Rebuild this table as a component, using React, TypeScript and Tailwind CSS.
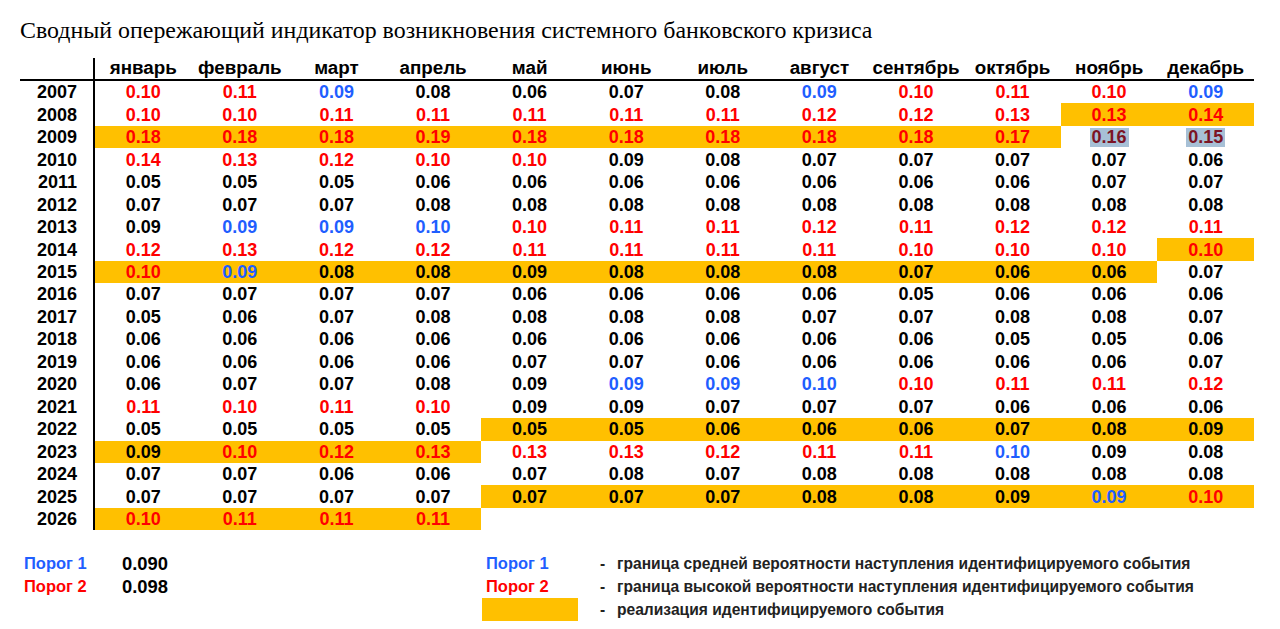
const months = [
  "январь",
  "февраль",
  "март",
  "апрель",
  "май",
  "июнь",
  "июль",
  "август",
  "сентябрь",
  "октябрь",
  "ноябрь",
  "декабрь",
];

// value + colour code: r = red, b = blue, k = black, d = dark red on grey
type Row = { year: number; cells: string[]; hl: [number, number] | null };

const rows: Row[] = [
  { year: 2007, cells: ["0.10r", "0.11r", "0.09b", "0.08k", "0.06k", "0.07k", "0.08k", "0.09b", "0.10r", "0.11r", "0.10r", "0.09b"], hl: null },
  { year: 2008, cells: ["0.10r", "0.10r", "0.11r", "0.11r", "0.11r", "0.11r", "0.11r", "0.12r", "0.12r", "0.13r", "0.13r", "0.14r"], hl: [10, 11] },
  { year: 2009, cells: ["0.18r", "0.18r", "0.18r", "0.19r", "0.18r", "0.18r", "0.18r", "0.18r", "0.18r", "0.17r", "0.16d", "0.15d"], hl: [0, 9] },
  { year: 2010, cells: ["0.14r", "0.13r", "0.12r", "0.10r", "0.10r", "0.09k", "0.08k", "0.07k", "0.07k", "0.07k", "0.07k", "0.06k"], hl: null },
  { year: 2011, cells: ["0.05k", "0.05k", "0.05k", "0.06k", "0.06k", "0.06k", "0.06k", "0.06k", "0.06k", "0.06k", "0.07k", "0.07k"], hl: null },
  { year: 2012, cells: ["0.07k", "0.07k", "0.07k", "0.08k", "0.08k", "0.08k", "0.08k", "0.08k", "0.08k", "0.08k", "0.08k", "0.08k"], hl: null },
  { year: 2013, cells: ["0.09k", "0.09b", "0.09b", "0.10b", "0.10r", "0.11r", "0.11r", "0.12r", "0.11r", "0.12r", "0.12r", "0.11r"], hl: null },
  { year: 2014, cells: ["0.12r", "0.13r", "0.12r", "0.12r", "0.11r", "0.11r", "0.11r", "0.11r", "0.10r", "0.10r", "0.10r", "0.10r"], hl: [11, 11] },
  { year: 2015, cells: ["0.10r", "0.09b", "0.08k", "0.08k", "0.09k", "0.08k", "0.08k", "0.08k", "0.07k", "0.06k", "0.06k", "0.07k"], hl: [0, 10] },
  { year: 2016, cells: ["0.07k", "0.07k", "0.07k", "0.07k", "0.06k", "0.06k", "0.06k", "0.06k", "0.05k", "0.06k", "0.06k", "0.06k"], hl: null },
  { year: 2017, cells: ["0.05k", "0.06k", "0.07k", "0.08k", "0.08k", "0.08k", "0.08k", "0.07k", "0.07k", "0.08k", "0.08k", "0.07k"], hl: null },
  { year: 2018, cells: ["0.06k", "0.06k", "0.06k", "0.06k", "0.06k", "0.06k", "0.06k", "0.06k", "0.06k", "0.05k", "0.05k", "0.06k"], hl: null },
  { year: 2019, cells: ["0.06k", "0.06k", "0.06k", "0.06k", "0.07k", "0.07k", "0.06k", "0.06k", "0.06k", "0.06k", "0.06k", "0.07k"], hl: null },
  { year: 2020, cells: ["0.06k", "0.07k", "0.07k", "0.08k", "0.09k", "0.09b", "0.09b", "0.10b", "0.10r", "0.11r", "0.11r", "0.12r"], hl: null },
  { year: 2021, cells: ["0.11r", "0.10r", "0.11r", "0.10r", "0.09k", "0.09k", "0.07k", "0.07k", "0.07k", "0.06k", "0.06k", "0.06k"], hl: null },
  { year: 2022, cells: ["0.05k", "0.05k", "0.05k", "0.05k", "0.05k", "0.05k", "0.06k", "0.06k", "0.06k", "0.07k", "0.08k", "0.09k"], hl: [4, 11] },
  { year: 2023, cells: ["0.09k", "0.10r", "0.12r", "0.13r", "0.13r", "0.13r", "0.12r", "0.11r", "0.11r", "0.10b", "0.09k", "0.08k"], hl: [0, 3] },
  { year: 2024, cells: ["0.07k", "0.07k", "0.06k", "0.06k", "0.07k", "0.08k", "0.07k", "0.08k", "0.08k", "0.08k", "0.08k", "0.08k"], hl: null },
  { year: 2025, cells: ["0.07k", "0.07k", "0.07k", "0.07k", "0.07k", "0.07k", "0.07k", "0.08k", "0.08k", "0.09k", "0.09b", "0.10r"], hl: [4, 11] },
  { year: 2026, cells: ["0.10r", "0.11r", "0.11r", "0.11r"], hl: [0, 3] },
];

const colorClass: Record<string, string> = {
  r: "text-[#ff0000]",
  b: "text-[#1f5eff]",
  k: "text-black",
  d: "text-[#7c1424]",
};

const sans = "font-['Liberation_Sans',Arial,sans-serif]";

function Cell({ value, hl }: { value?: string; hl: boolean }) {
  const code = value ? value.slice(-1) : "k";
  const text = value ? value.slice(0, -1) : "";
  return (
    <div className={`flex items-center justify-center h-[22.47px] ${hl ? "bg-[#ffc000]" : ""}`}>
      {code === "d" ? (
        <span className={`bg-[#a7c0d6] px-[2px] leading-[19px] ${colorClass[code]}`}>{text}</span>
      ) : (
        <span className={colorClass[code]}>{text}</span>
      )}
    </div>
  );
}

export default function App() {
  return (
    <div className={`w-[1280px] h-[629px] bg-white overflow-hidden ${sans}`}>
      <h1 className="pl-[20px] pt-[16px] h-[58px] text-[23.9px] leading-[28px] text-black font-['Liberation_Serif','Times_New_Roman',serif]">
        Сводный опережающий индикатор возникновения системного банковского кризиса
      </h1>

      <div className="ml-[20px] w-[1234px] text-[18px] font-bold leading-none">
        <div className="grid grid-cols-[75px_repeat(12,1fr)] border-b-2 border-black h-[23px] text-[18.8px]">
          <div className="border-r-2 border-black" />
          {months.map((m) => (
            <div key={m} className="flex items-center justify-center text-black">
              {m}
            </div>
          ))}
        </div>
        {rows.map((row) => (
          <div key={row.year} className="grid grid-cols-[75px_repeat(12,1fr)]">
            <div className="flex items-center justify-end pr-[16px] h-[22.47px] border-r-2 border-black text-black">
              {row.year}
            </div>
            {months.map((m, i) => {
              const hl = row.hl !== null && i >= row.hl[0] && i <= row.hl[1];
              return <Cell key={m} value={row.cells[i]} hl={hl} />;
            })}
          </div>
        ))}
      </div>

      <div className="flex mt-[22px] font-bold">
        <div className="w-[482px] pl-[24px] grid grid-cols-[98px_auto] content-start text-[16.5px] leading-[23px]">
          <div className="text-[#1f5eff]">Порог 1</div>
          <div className="text-black text-[18.4px]">0.090</div>
          <div className="text-[#ff0000]">Порог 2</div>
          <div className="text-black text-[18.4px]">0.098</div>
        </div>
        <div className="grid grid-cols-[118px_17px_auto] content-start text-[15.6px] leading-[23px]">
          <div className="pl-[4px] text-[16.5px] text-[#1f5eff]">Порог 1</div>
          <div className="text-[#222]">-</div>
          <div className="text-[#222]">граница средней вероятности наступления идентифицируемого события</div>
          <div className="pl-[4px] text-[16.5px] text-[#ff0000]">Порог 2</div>
          <div className="text-[#222]">-</div>
          <div className="text-[#222]">граница высокой вероятности наступления идентифицируемого события</div>
          <div className="flex items-center">
            <div className="w-[96px] h-[23px] bg-[#ffc000]" />
          </div>
          <div className="text-[#222]">-</div>
          <div className="text-[#222]">реализация идентифицируемого события</div>
        </div>
      </div>
    </div>
  );
}
